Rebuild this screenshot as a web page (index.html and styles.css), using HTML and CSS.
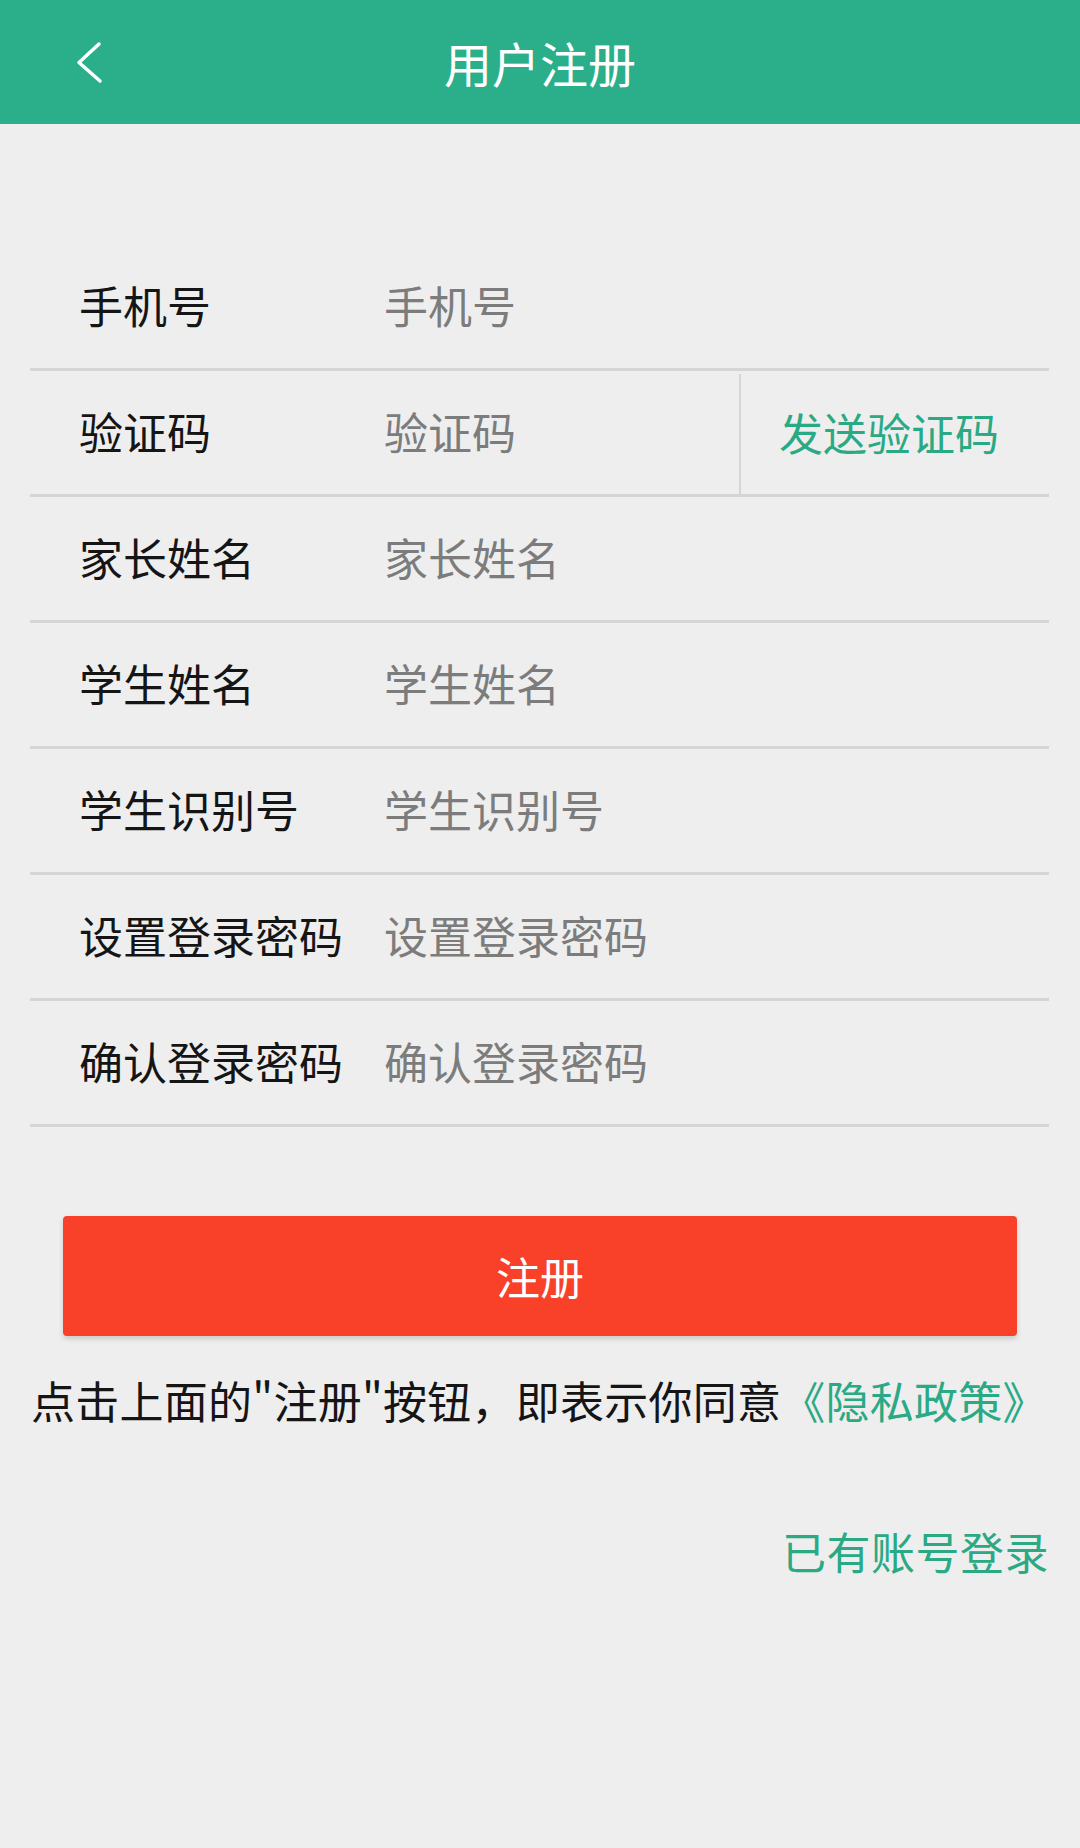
FILE: index.html
```html
<!DOCTYPE html>
<html lang="zh-CN">
<head>
    <meta charset="UTF-8">
    <title>用户注册</title>
    <link rel="stylesheet" href="styles.css">
</head>
<body>
    <div class="header">
        <div class="back">
            <svg width="30" height="44" viewBox="0 0 30 44">
                <polyline points="23,4 3,22.5 24,41" fill="none" stroke="#fff" stroke-width="3.5" stroke-linecap="round" stroke-linejoin="round"/>
            </svg>
        </div>
        <h1>用户注册</h1>
        <div></div>
    </div>

    <div class="form">
        <div class="row">
            <span class="label">手机号</span>
            <span class="hint">手机号</span>
        </div>
        <div class="row">
            <span class="label">验证码</span>
            <span class="hint">验证码</span>
            <span class="send">发送验证码</span>
        </div>
        <div class="row">
            <span class="label">家长姓名</span>
            <span class="hint">家长姓名</span>
        </div>
        <div class="row">
            <span class="label">学生姓名</span>
            <span class="hint">学生姓名</span>
        </div>
        <div class="row">
            <span class="label">学生识别号</span>
            <span class="hint">学生识别号</span>
        </div>
        <div class="row">
            <span class="label">设置登录密码</span>
            <span class="hint">设置登录密码</span>
        </div>
        <div class="row">
            <span class="label">确认登录密码</span>
            <span class="hint">确认登录密码</span>
        </div>
    </div>

    <div class="btn">注册</div>

    <p class="agree">点击上面的"注册"按钮，即表示你同意<span class="link">《隐私政策》</span></p>

    <p class="login">已有账号登录</p>
</body>
</html>
```

FILE: styles.css
```css
body {
    margin: 0;
    background: #eeeeee;
    font-family: "Noto Sans CJK SC", "Noto Sans", sans-serif;
    color: #151515;
}
.header {
    height: 124px;
    background: #2aaf8a;
    display: grid;
    grid-template-columns: 1fr auto 1fr;
    align-items: center;
    color: #fff;
}
.header .back {
    padding-left: 76px;
    display: flex;
}
.header h1 {
    margin: 0;
    font-size: 48px;
    font-weight: normal;
}

.form {
    margin: 121px 31px 0 30px;
}
.form .row {
    box-sizing: border-box;
    height: 126px;
    padding-bottom: 4px;
    display: flex;
    align-items: center;
    border-bottom: 3px solid #d5d5d5;
    font-size: 44px;
}
.form .label {
    width: 305px;
    padding-left: 49px;
    flex: none;
}
.form .hint {
    flex: 1;
    color: #7c7c7c;
}
.form .send {
    width: 310px;
    box-sizing: border-box;
    align-self: stretch;
    margin: 3px 0 -4px;
    padding: 0 0 4px 38px;
    border-left: 2px solid #d5d5d5;
    display: flex;
    align-items: center;
    color: #2aa985;
}

.btn {
    margin: 89px 63px 0;
    height: 120px;
    line-height: 120px;
    text-align: center;
    background: #f9412a;
    border-radius: 4px;
    box-shadow: 0 3px 5px rgba(0, 0, 0, 0.15);
    color: #fff;
    font-size: 44px;
}

.agree {
    margin: 34px 0 0;
    padding-left: 31px;
    font-size: 44px;
    line-height: 60px;
    letter-spacing: 0.25px;
    white-space: nowrap;
}
.agree .link {
    color: #2aa985;
}
.login {
    margin: 91px 0 0;
    padding-right: 31px;
    text-align: right;
    font-size: 44px;
    line-height: 60px;
    letter-spacing: 0.5px;
    color: #2aa985;
}
```
